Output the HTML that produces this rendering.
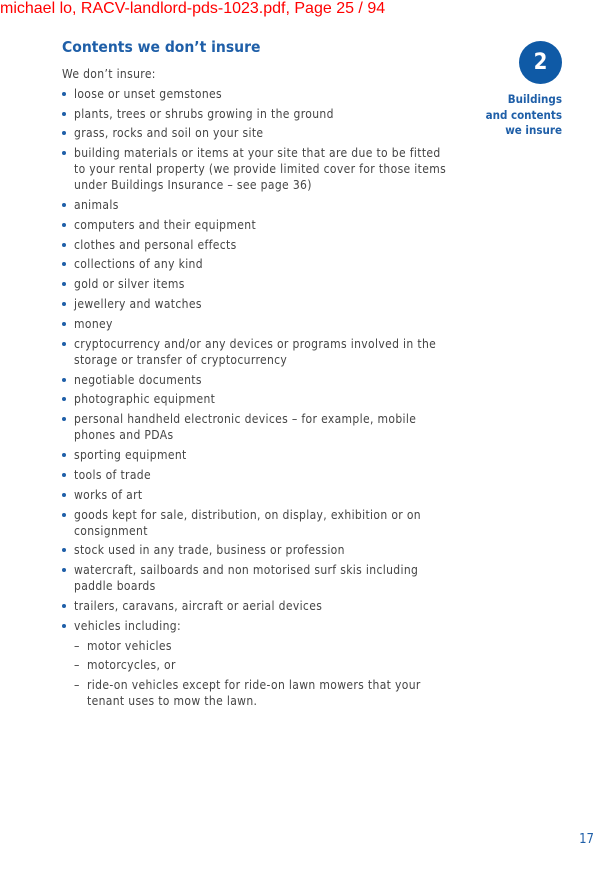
<!DOCTYPE html><html><head><style>
body{margin:0;width:612px;height:869px;background:#fff;position:relative;font-family:"DejaVu Sans Condensed","Liberation Sans",sans-serif;overflow:hidden}
.l{position:absolute;left:74px;font-size:12px;color:#444;white-space:nowrap;line-height:14px;letter-spacing:0.35px}
.b{position:absolute;left:62px;width:4px;height:4px;border-radius:50%;background:#1f5fa8}
</style></head><body>
<div style="position:absolute;left:0;top:0;font-family:'Liberation Sans',sans-serif;font-size:16px;color:#f00">michael lo, RACV-landlord-pds-1023.pdf, Page 25 / 94</div>
<div style="position:absolute;left:62px;top:38px;font-size:15.5px;font-weight:bold;color:#1f5fa8;font-family:'DejaVu Sans Condensed',sans-serif">Contents we don’t insure</div>
<div class="l" style="left:62px;top:67px">We don’t insure:</div>
<div style="position:absolute;left:519px;top:41px;width:43px;height:43px;border-radius:50%;background:#0f5aa6;color:#fff;font-size:22px;font-weight:bold;text-align:center;line-height:43px">2</div>
<div style="position:absolute;right:50px;top:92px;text-align:right;color:#1f5fa8;font-size:11.5px;line-height:15.5px;font-weight:bold;font-family:'DejaVu Sans Condensed',sans-serif">Buildings<br>and contents<br>we insure</div>
<div style="position:absolute;right:18px;top:832px;color:#1f5fa8;font-size:13px">17</div>
<div id="c"></div>
<script>
var items=[[94,"loose or unset gemstones"],[114,"plants, trees or shrubs growing in the ground"],[133,"grass, rocks and soil on your site"],[153,"building materials or items at your site that are due to be fitted","to your rental property (we provide limited cover for those items","under Buildings Insurance – see page 36)"],[205,"animals"],[225,"computers and their equipment"],[245,"clothes and personal effects"],[264,"collections of any kind"],[284,"gold or silver items"],[304,"jewellery and watches"],[324,"money"],[344,"cryptocurrency and/or any devices or programs involved in the","storage or transfer of cryptocurrency"],[380,"negotiable documents"],[399,"photographic equipment"],[419,"personal handheld electronic devices – for example, mobile","phones and PDAs"],[455,"sporting equipment"],[475,"tools of trade"],[495,"works of art"],[515,"goods kept for sale, distribution, on display, exhibition or on","consignment"],[550,"stock used in any trade, business or profession"],[570,"watercraft, sailboards and non motorised surf skis including","paddle boards"],[606,"trailers, caravans, aircraft or aerial devices"],[626,"vehicles including:"]];
var h="";
items.forEach(function(it){h+='<div class="b" style="top:'+(it[0]-2)+'px"></div>';for(var i=1;i<it.length;i++)h+='<div class="l" style="top:'+(it[0]-7+(i-1)*16)+'px">'+it[i]+'</div>';});
[[646,"motor vehicles"],[665,"motorcycles, or"],[685,"ride-on vehicles except for ride-on lawn mowers that your","tenant uses to mow the lawn."]].forEach(function(it){h+='<div class="l" style="top:'+(it[0]-7)+'px">–</div>';for(var i=1;i<it.length;i++)h+='<div class="l" style="left:87px;top:'+(it[0]-7+(i-1)*16)+'px">'+it[i]+'</div>';});
document.getElementById("c").innerHTML=h;
</script>
</body></html>
